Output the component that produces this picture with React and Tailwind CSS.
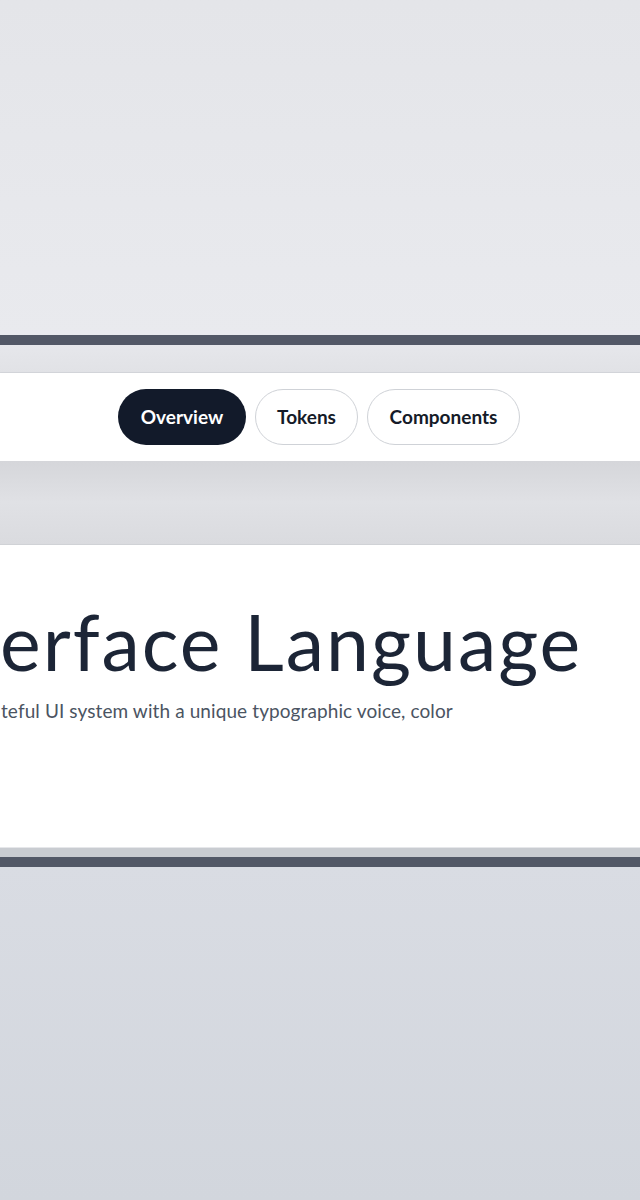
export default function App() {
  const tabs = [
    { label: 'Overview', w: 'w-[128px]', active: true },
    { label: 'Tokens', w: 'w-[103px]' },
    { label: 'Components', w: 'w-[153px]' },
  ]

  return (
    <div className="flex h-[1200px] w-full flex-col overflow-hidden font-['Lato','Inter',sans-serif]">
      {/* top backdrop */}
      <div className="h-[335px] bg-gradient-to-b from-[#e4e5e9] to-[#e9eaee]" />
      <div className="h-[10px] bg-[#525866]" />
      <div className="h-[28px] border-b border-[#d3d5da] bg-gradient-to-b from-[#e6e7eb] to-[#e1e2e6]" />

      {/* tab bar */}
      <nav className="flex h-[88px] items-center justify-center gap-[9px] bg-white pr-[2px] shadow-[0_2px_4px_rgba(0,0,0,0.05)]">
        {tabs.map((t) => (
          <button
            key={t.label}
            className={`${t.w} h-[56px] rounded-full text-[19px] font-bold ${
              t.active
                ? 'bg-[#121a2a] text-white'
                : 'border border-[#cfd2d7] bg-white text-[#151b28]'
            }`}
          >
            {t.label}
          </button>
        ))}
      </nav>

      <div className="h-[84px] border-b border-[#d0d2d6] bg-gradient-to-b from-[#d5d6da] via-[#e0e1e5] to-[#dadbdf]" />

      {/* hero card */}
      <section className="h-[302px] bg-white pt-[58px]">
        <h1 className="whitespace-nowrap text-[77px] font-normal leading-none tracking-[2px] text-[#1c2536]">
          erface Language
        </h1>
        <p className="mt-[17px] whitespace-nowrap pl-[1px] text-[19px] leading-[28px] tracking-[0.1px] text-[#4b5462]">
          teful UI system with a unique typographic voice, color
        </p>
      </section>

      <div className="h-[10px] border-t border-[#e6e7ea] bg-[#c9ccd1]" />
      <div className="h-[10px] bg-[#525866]" />
      <div className="flex-1 bg-gradient-to-b from-[#d9dce3] to-[#d2d6dd]" />
    </div>
  )
}
